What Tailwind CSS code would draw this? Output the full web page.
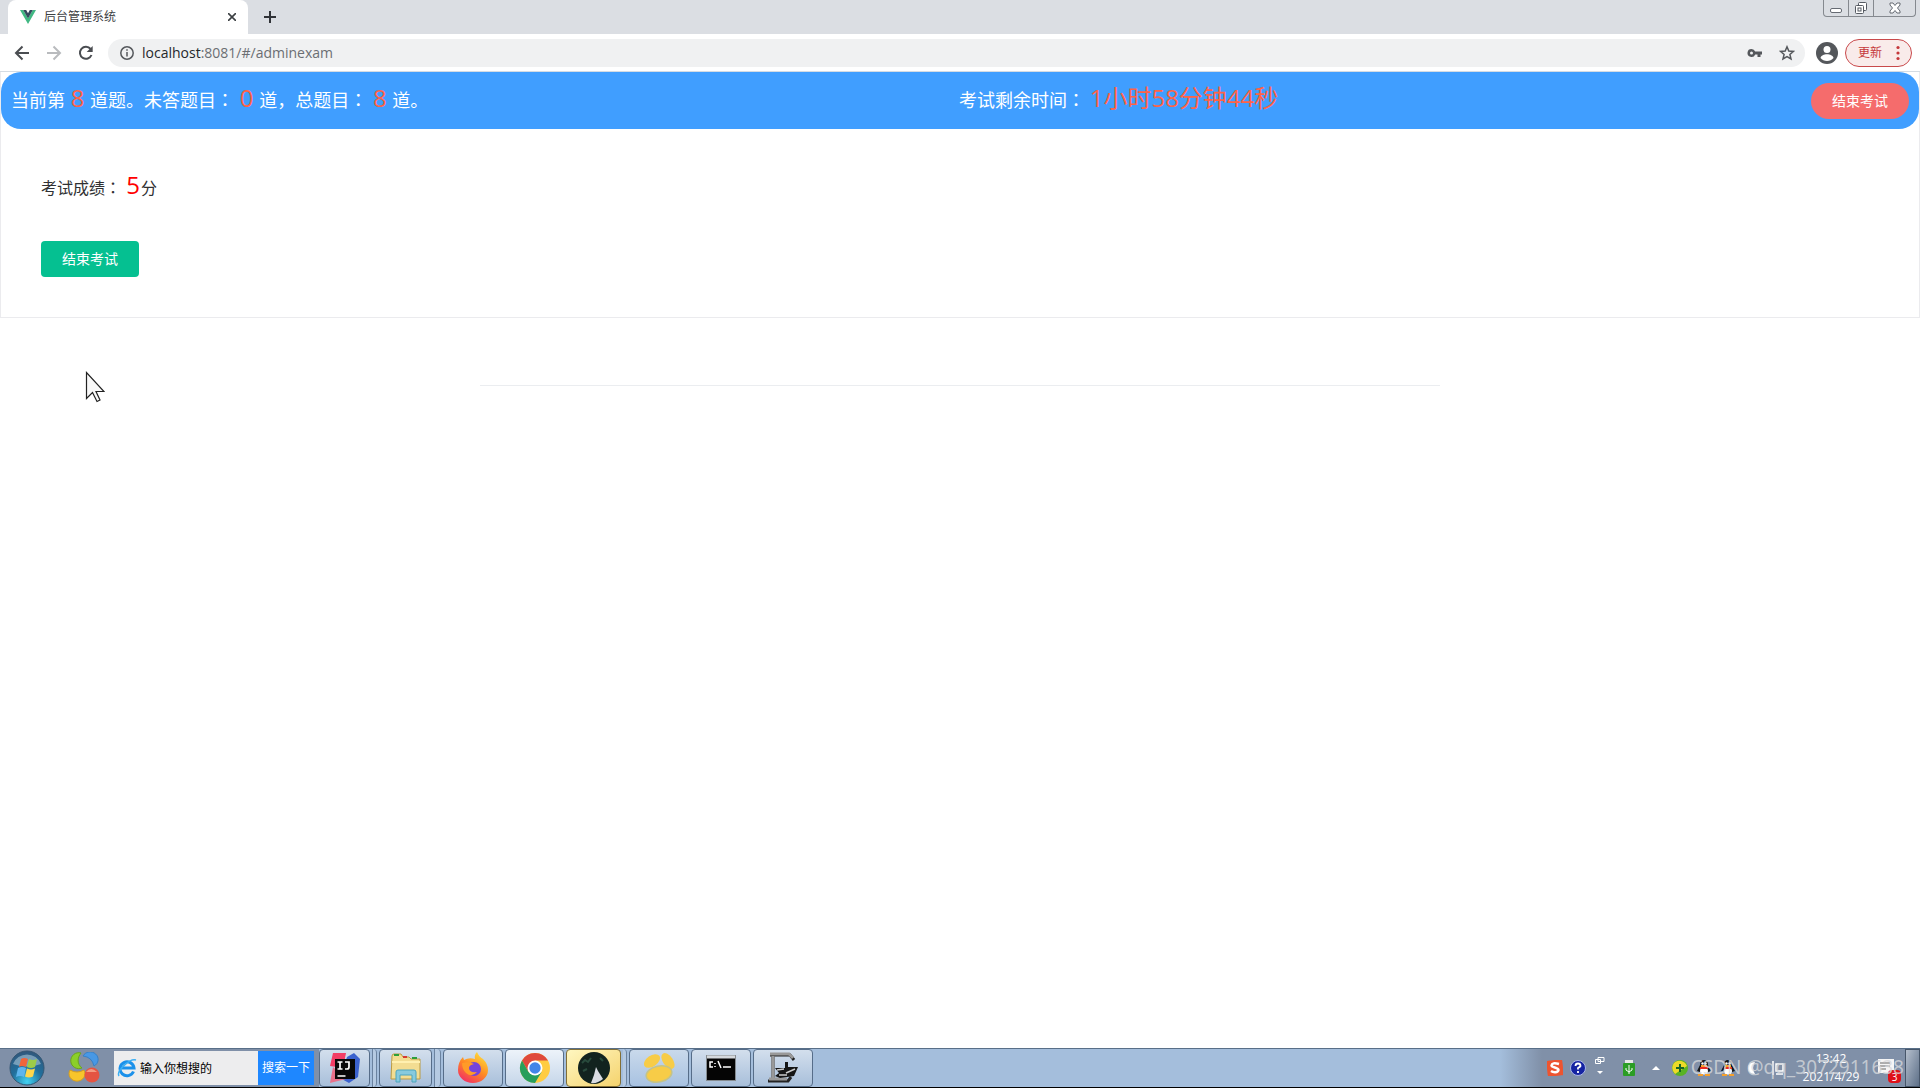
<!DOCTYPE html>
<html lang="zh-CN">
<head>
<meta charset="utf-8">
<title>后台管理系统</title>
<script src="https://cdn.jsdelivr.net/npm/@tailwindcss/browser@4"></script>
</head>
<body class="flex min-h-screen flex-col bg-white font-['Open_Sans','Noto_Sans_CJK_SC',sans-serif] text-[#303133]">

<!-- Browser tabs -->
<header>
  <div class="flex h-[34px] items-start bg-[#dbdee3]">
    <div class="ml-2 flex h-[34px] w-60 items-center rounded-t-lg bg-white pl-3 pr-[6px] text-xs text-[#3c4043]">
      <svg class="h-4 w-4" viewBox="0 0 16 16"><path d="M0 1h3.2L8 9.3 12.800 1H16L8 15z" fill="#41b883"/><path d="M3.200 1h3L8 4.200 9.800 1h3L8 9.400z" fill="#35495e"/></svg>
      <span class="ml-2 flex-1">后台管理系统</span>
      <button aria-label="关闭标签" class="flex h-5 w-5 items-center justify-center"><svg class="h-2 w-2" viewBox="0 0 8 8" stroke="#3c4043" stroke-width="1.600"><path d="M0 0l8 8M8 0L0 8"/></svg></button>
    </div>
    <button aria-label="新标签" class="ml-3 flex h-[34px] w-5 items-center justify-center"><svg class="h-3 w-3" viewBox="0 0 12 12" stroke="#303338" stroke-width="2"><path d="M6 0v12M0 6h12"/></svg></button>
    <div class="ml-auto mr-1 flex h-[17px] w-[93px] rounded-b border border-t-0 border-[#85898f]">
      <button aria-label="最小化" class="flex w-[25px] items-center justify-center border-r border-[#85898f]"><svg class="mt-1 h-2 w-3" viewBox="0 0 12 8"><rect x=".5" y="2.500" width="11" height="4" rx="1.500" fill="#fff" stroke="#666b73"/></svg></button>
      <button aria-label="还原" class="flex w-[25px] items-center justify-center border-r border-[#85898f]"><svg class="h-[14px] w-[14px]" viewBox="0 0 14 14" fill="#fff" stroke="#555a62"><rect x="4.500" y="1.500" width="8" height="8" rx="1"/><rect x="1.500" y="4.500" width="8" height="8" rx="1"/><rect x="4" y="7" width="3" height="3"/></svg></button>
      <button aria-label="关闭" class="flex flex-1 items-center justify-center"><svg class="h-3 w-3" viewBox="0 0 12 12" fill="#fff" stroke="#666b73"><path d="M1 1h3l2 2.500L8 1h3v2L8.500 6 11 9v2H8L6 8.500 4 11H1V9l2.500-3L1 3z"/></svg></button>
    </div>
  </div>

  <!-- Address bar -->
  <div class="flex h-[38px] items-center border-b border-[#d5dce3] bg-white pl-3">
    <button aria-label="后退" class="flex h-5 w-5 items-center justify-center"><svg class="h-4 w-4" viewBox="0 0 16 16" fill="none" stroke="#4a4d51" stroke-width="2"><path d="M15 8H2M8.500 1.500L2 8l6.500 6.500"/></svg></button>
    <button aria-label="前进" class="ml-3 flex h-5 w-5 items-center justify-center"><svg class="h-4 w-4" viewBox="0 0 16 16" fill="none" stroke="#b9bbbe" stroke-width="2"><path d="M1 8h13M7.500 1.500L14 8l-6.500 6.500"/></svg></button>
    <button aria-label="刷新" class="ml-3 flex h-5 w-5 items-center justify-center"><svg class="h-4 w-4" viewBox="0 0 16 16" fill="none" stroke="#4a4d51" stroke-width="2"><path d="M13.500 10A6 6 0 1 1 12.600 4"/><path d="M14.700 1v6h-6z" fill="#4a4d51" stroke="none"/></svg></button>
    <div class="ml-3 flex h-7 flex-1 items-center rounded-full bg-[#f0f1f2] pl-3 pr-[10px]">
      <svg class="h-[14px] w-[14px] shrink-0" viewBox="0 0 14 14" fill="none" stroke="#55585c" stroke-width="1.500"><circle cx="7" cy="7" r="6.200"/><path d="M7 6v4.500M7 3.300v1.500"/></svg>
      <div class="relative ml-2 flex-1 text-sm">
        <input id="url" aria-label="地址" class="w-full bg-transparent text-sm text-transparent outline-none" value="">
        <span class="pointer-events-none absolute inset-0 flex items-center text-[#6b6e72]"><span class="text-[#25282c]">localhost</span>:8081/#/adminexam</span>
      </div>
      <svg class="h-4 w-4" viewBox="0 0 16 16" fill="#54575b"><path fill-rule="evenodd" d="M4.500 4a4 4 0 0 1 3.700 2.500H15v3h-1.500V12h-3V9.500H8.200A4 4 0 1 1 4.500 4zm0 2.500a1.500 1.500 0 1 0 0 3 1.500 1.500 0 0 0 0-3z"/></svg>
      <svg class="ml-4 h-4 w-4" viewBox="0 0 16 16" fill="none" stroke="#54575b" stroke-width="1.500"><path d="M8 1.800l1.800 4.200 4.600.4-3.500 3 1.100 4.500-4-2.400-4 2.400 1.100-4.500-3.500-3 4.600-.4z"/></svg>
    </div>
    <button aria-label="用户" class="ml-[11px]"><svg class="h-[22px] w-[22px]" viewBox="0 0 22 22"><circle cx="11" cy="11" r="11" fill="#54575b"/><circle cx="11" cy="7.500" r="3.500" fill="#fff"/><path d="M4.500 16c1-5 12-5 13 0-3 4-10 4-13 0z" fill="#fff"/></svg></button>
    <button class="ml-[7px] mr-2 flex h-7 w-[67px] items-center rounded-full border border-[#c9494b] bg-[#f9ebea] pl-3 text-xs text-[#c5373a]">更新<svg class="ml-[14px] h-4 w-1" viewBox="0 0 4 16" fill="#c5373a"><circle cx="2" cy="2.500" r="1.600"/><circle cx="2" cy="8" r="1.600"/><circle cx="2" cy="13.500" r="1.600"/></svg></button>
  </div>
</header>

<!-- Exam page -->
<main class="flex-1">
  <section class="border border-t-0 border-[#ebebee]">
    <div class="grid h-[57px] grid-cols-2 items-center rounded-[20px] bg-[#409eff] pl-2 pr-[10px] text-lg leading-7 text-white">
      <p class="whitespace-nowrap pb-[3px] pl-[2px]">当前第 <span class="mx-px text-2xl leading-7 text-[#ff6347]">8</span> 道题。未答题目<span lang="zh-TW" class="font-['Noto_Sans_CJK_TC']">：</span> <span class="mx-px text-2xl leading-7 text-[#ff6347]">0</span> 道，总题目<span lang="zh-TW" class="font-['Noto_Sans_CJK_TC']">：</span> <span class="mx-px text-2xl leading-7 text-[#ff6347]">8</span> 道。</p>
      <div class="flex items-center justify-between">
        <p class="whitespace-nowrap pb-[3px]">考试剩余时间<span lang="zh-TW" class="font-['Noto_Sans_CJK_TC']">：</span> <span class="text-2xl leading-7 text-[#ff6347]">1小时58分钟44秒</span></p>
        <button class="h-9 w-[98px] rounded-full bg-[#f56c6c] text-sm text-white">结束考试</button>
      </div>
    </div>
    <div class="px-10 pb-10 pt-[42px]">
      <p class="text-base leading-7">考试成绩<span lang="zh-TW" class="font-['Noto_Sans_CJK_TC']">：</span> <span class="mx-px text-2xl leading-7 text-[#f00]">5</span>分</p>
      <button class="mt-[39px] block h-9 w-[98px] rounded bg-[#05c091] text-sm text-white">结束考试</button>
    </div>
  </section>
  <hr class="mx-auto mt-[67px] w-1/2 border-[#ebedf0]">
</main>

<!-- Mouse pointer -->
<svg class="absolute left-[85px] top-[371px] h-8 w-5" viewBox="0 0 20 32" fill="#f8f8f8" stroke="#222" stroke-width="1.200"><path d="M1.500 1.500v26l6-6 4.500 9 3-1.500-4-8.500h8z"/></svg>

<!-- Taskbar -->
<footer class="relative flex h-10 items-center border-b border-t border-b-black border-t-[#596f88] bg-[#a4bedc]">
  <div class="flex h-full w-[319px] items-center bg-[#8090a8]">
    <button aria-label="开始" class="ml-[9px]"><svg class="h-9 w-9" viewBox="0 0 36 36"><defs><radialGradient id="orb" cx=".5" cy=".9" r=".9"><stop offset="0" stop-color="#42d2f2"/><stop offset=".5" stop-color="#216f9c"/><stop offset="1" stop-color="#31577b"/></radialGradient></defs><circle cx="18" cy="18" r="17" fill="url(#orb)" stroke="#345673"/><path d="M4 14A15 15 0 0 1 32 14Q18 19 4 14z" fill="#c5d9e5" opacity=".5"/><path d="M12 9q3-2 7 0l-2 8q-4-2-7 0z" fill="#ef653b"/><path d="M20 9q4 2 8 0l-2 8q-4 2-8 0z" fill="#9ccc48"/><path d="M9 18q4-2 8 0l-2 9q-4-2-8 0z" fill="#5eb5ee"/><path d="M18 18.500q4 2 8 0l-2 8q-4 2-8 0z" fill="#ffd64b"/></svg></button>
    <button aria-label="桌面助手" class="ml-[23px]"><svg class="h-8 w-8" viewBox="0 0 32 32"><path d="M13 1A8 8 0 1 0 14 16C9 12 9 6 13 1z" fill="#8bcf28" stroke="#6ca41c"/><path d="M15 4a8 7.500 0 1 1 11 10Q24 5 15 4z" fill="#4898e5" stroke="#3680c8"/><path d="M2 18q7 4 14 0a8 7.500 0 1 1-14 0z" fill="#f7c52b" stroke="#d59c20"/><circle cx="24" cy="23" r="7.500" fill="#e55442"/><path d="M18 20q5-6 11 0z" fill="#f59a80"/></svg></button>
    <form class="ml-[14px] flex h-[34px] w-[200px]">
      <label for="q" class="flex w-[23px] items-center justify-end bg-[#ededee]"><svg class="h-5 w-5" viewBox="0 0 20 20" fill="none"><path d="M16.500 13.500A7 7 0 1 1 17 10H5" stroke="#1c91ea" stroke-width="3"/><path d="M2 18C-1 13 13 0 19 2" stroke="#39aef4" stroke-width="1.500"/></svg></label>
      <input id="q" aria-label="搜索" class="h-[34px] w-[121px] bg-[#ededee] pl-[3px] text-xs text-black outline-none" value="输入你想搜的">
      <button type="button" class="flex-1 whitespace-nowrap bg-[#1e87ff] text-xs text-white">搜索一下</button>
    </form>
  </div>
  <nav class="flex h-full items-center gap-[2px]">
    <button aria-label="IntelliJ IDEA" class="flex h-full w-[51px] items-center justify-center rounded border border-[#566d89] bg-linear-to-b from-[#d3dfed] to-[#a8bfda]"><svg class="h-8 w-8" viewBox="0 0 32 32"><path d="M4 1h13l-3 15L1 14z" fill="#f33d65"/><path d="M18 5l7-4 6 6-2 18-9 6-9-5z" fill="#3b62ce"/><path d="M1 31l3-16 13 12z" fill="#e8708a"/><rect x="6" y="7" width="20" height="20" fill="#080808"/><path d="M8.500 10h5M11 10v7M8.500 17h5M16 10h4v5q0 2-2 2h-2M8.500 24h8" stroke="#fff" stroke-width="1.700" fill="none"/></svg></button>
    <span class="h-full w-[5px] rounded-r border-x border-[#6b83a0] bg-[#b5cae2]"></span>
    <button aria-label="资源管理器" class="flex h-full w-[53px] items-center justify-center rounded border border-[#566d89] bg-linear-to-b from-[#d3dfed] to-[#a8bfda]"><svg class="h-8 w-8" viewBox="0 0 32 32"><path d="M2 4q0-2 2-2h7l2 3h6l2 2h9v20H1z" fill="#f3dd92" stroke="#ba9b42"/><path d="M2 10h28" stroke="#fff0b0" stroke-width="2"/><path d="M4 3h5M22 6h5" stroke="#2d9f3a" stroke-width="2"/><path d="M13 5h4" stroke="#d63932" stroke-width="2"/><path d="M6 30V20q0-2 2-2h16q2 0 2 2v10h-4v-7H10v7z" fill="#87cadd" stroke="#4da4bd"/></svg></button>
    <span class="h-full w-[7px] rounded-r border-x border-[#6b83a0] bg-[#b5cae2]"></span>
    <button aria-label="Firefox" class="flex h-full w-[60px] items-center justify-center rounded border border-[#566d89] bg-linear-to-b from-[#d3dfed] to-[#a8bfda]"><svg class="h-8 w-8" viewBox="0 0 32 32"><defs><linearGradient id="fox" x1=".8" x2=".2" y2="1"><stop stop-color="#ffe23d"/><stop offset=".5" stop-color="#ff8b24"/><stop offset="1" stop-color="#f12967"/></linearGradient></defs><path d="M18 7Q17 3 20 0q2 5 6 7 5 5 5 11a15 13 0 0 1-30 0Q1 10 6 5l1 3q5-3 11-1z" fill="url(#fox)"/><circle cx="17" cy="17" r="7" fill="#7444da"/><path d="M5 11q7-2 12 1-5 1-5 4 0 5 8 4-5 6-11 1-4-4-4-10z" fill="#ff9b28"/></svg></button>
    <button aria-label="Chrome" class="flex h-full w-[59px] items-center justify-center rounded border border-[#566d89] bg-linear-to-b from-[#edf3fa] to-[#c5d6e9]"><svg class="h-8 w-8" viewBox="0 0 32 32"><circle cx="16" cy="16" r="15" fill="#ffcc42"/><path d="M3 8.500A15 15 0 0 1 29 8.500H16L9.500 20z" fill="#df493c"/><path d="M3 8.500A15 15 0 0 0 16 31l6.500-11L16 23l-6.500-3z" fill="#279e5b"/><circle cx="16" cy="16" r="7.500" fill="#fff"/><circle cx="16" cy="16" r="5.700" fill="#4285e8"/></svg></button>
    <button aria-label="相册" class="flex h-full w-[55px] items-center justify-center rounded border border-[#826f37] bg-linear-to-br from-[#fff7c0] to-[#f5d36c]"><svg class="h-8 w-8" viewBox="0 0 32 32"><circle cx="16" cy="16" r="16" fill="#12231f"/><path d="M4 11l3-3 3 2 3-4M22 6l3 3M5 19l4-2" stroke="#284a3c" stroke-width="2" fill="none"/><path d="M18 15l2 4 5 8q-6 5-12 4l3-8z" fill="#d9dce3"/></svg></button>
    <span class="h-full w-1 rounded-r border-r border-[#6b83a0] bg-[#b5cae2]"></span>
    <button aria-label="Navicat" class="flex h-full w-[60px] items-center justify-center rounded border border-[#566d89] bg-linear-to-b from-[#c9d9eb] to-[#a8c2e1]"><svg class="h-8 w-8" viewBox="0 0 32 32" fill="#f7cc47"><ellipse cx="9" cy="9" rx="9" ry="5.500" transform="rotate(-35 9 9)"/><ellipse cx="25" cy="9" rx="9" ry="5" transform="rotate(55 25 9)"/><ellipse cx="16" cy="22" rx="13" ry="8" transform="rotate(-12 16 22)" stroke="#c4c389" stroke-width="1.500"/></svg></button>
    <button aria-label="命令提示符" class="flex h-full w-[60px] items-center justify-center rounded border border-[#566d89] bg-linear-to-b from-[#d3dfed] to-[#a8bfda]"><svg class="h-7 w-8" viewBox="0 0 32 28"><rect x="1.500" y="1.500" width="29" height="25" fill="#050505" stroke="#858b90"/><path d="M2 3h28" stroke="#d5d9dd" stroke-width="3"/><path d="M8 8H5v5h3M10 9v1M10 12v1M13 7l3 7M18 13h8" stroke="#fff" stroke-width="1.500" fill="none"/></svg></button>
    <button aria-label="录屏" class="flex h-full w-[60px] items-center justify-center rounded border border-[#566d89] bg-linear-to-b from-[#d3dfed] to-[#a8bfda]"><svg class="h-8 w-8" viewBox="0 0 32 32"><path d="M3 3h20l4 5M6 3v24M1 29h20l3-4" fill="none" stroke="#222" stroke-width="3"/><path d="M3 2h19l4 4M6 4v22M2 27h18" fill="none" stroke="#999" stroke-width="3"/><path d="M8 16h10v-6h3v5h10l-4 9-14 2-5-2 4-3z" fill="#151515"/><path d="M10 18l7-1M19 21l9-4M12 23h8" stroke="#ccc" stroke-width="1.500"/></svg></button>
  </nav>

  <div class="ml-auto flex h-full w-[420px] items-center bg-linear-to-r from-[#a4bedc] to-[#8090a8] to-10%">
    <svg class="ml-[47px] h-4 w-4" viewBox="0 0 16 16"><rect width="16" height="16" rx="2" fill="#ed5430" transform="rotate(-6 8 8)"/><path d="M12 4Q5 2 4.500 5.500C5 8 11 7 11.500 10 11 13 6 12.500 4 11" fill="none" stroke="#fff" stroke-width="2.400"/></svg>
    <svg class="ml-[7px] h-4 w-4" viewBox="0 0 16 16"><circle cx="8" cy="8" r="7.500" fill="#1523a2" stroke="#a9b5e6"/><path d="M5.500 6q0-2.500 2.500-2.500T10.500 6Q10 7 8 8v1.500M8 11v2" fill="none" stroke="#fff" stroke-width="1.800"/></svg>
    <svg class="ml-2 mt-[7px] h-5 w-3 self-start" viewBox="0 0 12 20" fill="none" stroke="#fff"><path d="M4 1.500h6v4H4zM1.500 3.500h5v4h-5z"/><path d="M3 15h6l-3 3z" fill="#fff" stroke="none"/></svg>
    <svg class="ml-[17px] h-4 w-3" viewBox="0 0 12 16"><rect x="2" width="8" height="4" fill="#e8e8e8"/><rect y="3" width="12" height="13" rx="1" fill="#2b9d25"/><path d="M6 5v9M3 8v2l3 2 3-2V8" stroke="#fff" fill="none"/></svg>
    <svg class="ml-[17px] h-1 w-2" viewBox="0 0 8 4"><path d="M0 4h8L4 0z" fill="#fff"/></svg>
    <svg class="ml-3 h-4 w-4" viewBox="0 0 16 16"><circle cx="8" cy="8" r="8" fill="#58b324"/><path d="M2 3a8 8 0 0 1 13 3L3 14Q-2 8 2 3z" fill="#edda28"/><path d="M8 4v8M4 8h8" stroke="#176626" stroke-width="2"/></svg>
    <svg class="ml-2 h-4 w-4" viewBox="0 0 16 16"><path d="M8 0q4 0 4 5l3 6-3 1q-4 4-8 0l-3-1 3-6q0-5 4-5z" fill="#161616"/><ellipse cx="8" cy="11" rx="4" ry="3.500" fill="#fff"/><circle cx="6.500" cy="3.500" r="1.200" fill="#fff"/><circle cx="9.500" cy="3.500" r="1.200" fill="#fff"/><path d="M5 6h6M2 15h5M9 15h5" stroke="#f6a02b" stroke-width="2"/><path d="M4 8h8" stroke="#e82b21" stroke-width="2"/></svg>
    <svg class="ml-2 h-4 w-4" viewBox="0 0 16 16"><path d="M8 0q4 0 4 5l3 6-3 1q-4 4-8 0l-3-1 3-6q0-5 4-5z" fill="#161616"/><ellipse cx="8" cy="11" rx="4" ry="3.500" fill="#fff"/><circle cx="6.500" cy="3.500" r="1.200" fill="#fff"/><circle cx="9.500" cy="3.500" r="1.200" fill="#fff"/><path d="M5 6h6M2 15h5M9 15h5" stroke="#f6a02b" stroke-width="2"/><path d="M4 8h8" stroke="#e82b21" stroke-width="2"/></svg>
    <svg class="ml-3 h-3 w-2" viewBox="0 0 8 12"><path d="M7 0Q3 6 7 12 0 12 0 6T7 0z" fill="#fff"/></svg>
    <svg class="ml-4 h-4 w-3" viewBox="0 0 12 16" fill="none" stroke="#fff" stroke-width="1.500"><path d="M1 1v14M4 4h7v7H4zM4 14h7"/></svg>
    <div class="ml-auto flex w-16 flex-col items-center text-xs leading-[18px] text-white"><time>13:42</time><time>2021/4/29</time></div>
    <div class="relative ml-[14px] h-6 w-6">
      <svg class="h-5 w-5" viewBox="0 0 20 20"><rect x="1" y="3" width="16" height="14" fill="#f5f5f5"/><path d="M3 7h10M3 10h10M3 13h6" stroke="#666"/></svg>
      <span class="absolute bottom-[-3px] right-0 flex h-[13px] w-[13px] items-center justify-center rounded-sm bg-[#df1018] text-[10px] leading-3 text-white">3</span>
    </div>
    <button aria-label="显示桌面" class="ml-1 h-full w-[15px] border border-[#47566a] bg-linear-to-br from-[#b5bfcd] to-[#5e7088]"></button>
  </div>
  <span class="pointer-events-none absolute right-4 top-1 whitespace-nowrap text-[19px] leading-7 text-[#d5d8dc]/80 font-['Noto_Sans']">CSDN @qq_3072911638</span>
</footer>
</body>
</html>
